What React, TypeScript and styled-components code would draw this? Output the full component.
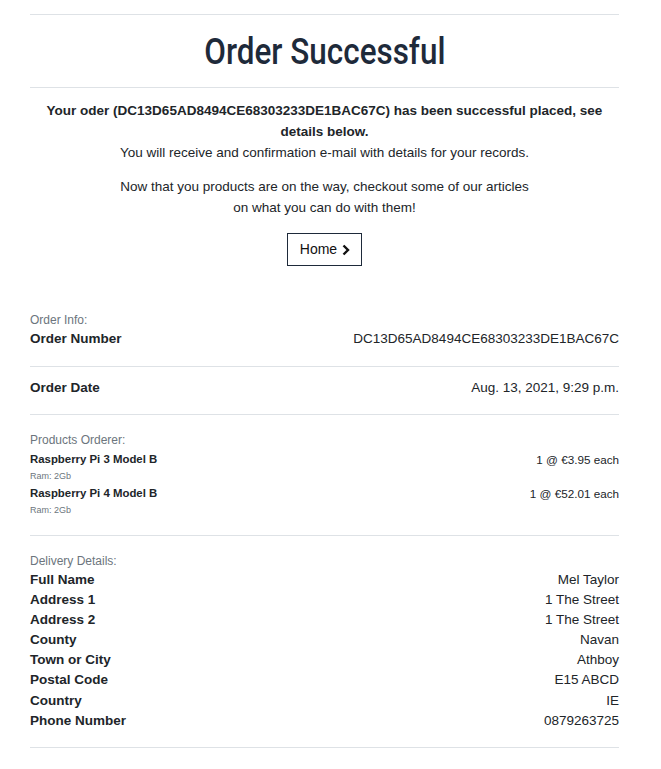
import styled, { createGlobalStyle } from "styled-components";

const GlobalStyle = createGlobalStyle`
  body {
    margin: 0;
    background: #ffffff;
    font-family: "Liberation Sans", Arial, sans-serif;
    color: #212529;
  }
`;

const Page = styled.div`
  width: 589px;
  margin-left: 30px;
  padding-top: 14px;
`;

const Rule = styled.hr`
  border: none;
  border-top: 1px solid #dee2e6;
  margin: 0;
`;

const TitleBox = styled.div`
  height: 72px;
  display: flex;
  align-items: center;
  justify-content: center;
`;

const Title = styled.h1`
  margin: 0;
  font-family: Roboto, "Liberation Sans", sans-serif;
  font-weight: 500;
  font-size: 37px;
  color: #1e2a3a;
  transform: scaleX(0.85);
`;

const Intro = styled.div`
  text-align: center;
  font-size: 13.5px;
  line-height: 21px;
  padding-top: 12px;
`;

const Strong = styled.p`
  margin: 0;
  font-weight: 700;
`;

const Plain = styled.p<{ $gap?: number }>`
  margin: 0;
  margin-top: ${(p) => p.$gap ?? 0}px;
`;

const HomeButton = styled.a`
  display: inline-flex;
  align-items: center;
  gap: 4px;
  margin-top: 15px;
  height: 33px;
  padding: 0 10px 0 12px;
  box-sizing: border-box;
  border: 1px solid #1e2a3a;
  color: #111;
  font-size: 14px;
  text-decoration: none;
`;

const Section = styled.div<{ $top?: number; $bottom?: number }>`
  padding-top: ${(p) => p.$top ?? 0}px;
  padding-bottom: ${(p) => p.$bottom ?? 0}px;
`;

const Caption = styled.div<{ $gap?: number }>`
  font-size: 12px;
  line-height: 14px;
  color: #6c757d;
  margin-bottom: ${(p) => p.$gap ?? 0}px;
`;

const Row = styled.div<{ $h: number; $pad?: number }>`
  display: flex;
  justify-content: space-between;
  align-items: flex-start;
  box-sizing: border-box;
  height: ${(p) => p.$h}px;
  padding-top: ${(p) => p.$pad ?? 0}px;
  font-size: 13.5px;
  line-height: ${(p) => (p.$pad ? 18 : p.$h)}px;
`;

const Label = styled.span`
  font-weight: 700;
`;

const ItemList = styled.div`
  margin-top: 3.5px;
`;

const ItemRow = styled.div`
  display: flex;
  justify-content: space-between;
  align-items: flex-start;
`;

const ItemName = styled.div`
  font-size: 11.4px;
  font-weight: 700;
  line-height: 17px;
`;

const ItemMeta = styled.div`
  font-size: 9px;
  color: #6c757d;
  line-height: 17px;
`;

const ItemPrice = styled.div`
  font-size: 11.7px;
  line-height: 17px;
`;

const delivery: [string, string][] = [
  ["Full Name", "Mel Taylor"],
  ["Address 1", "1 The Street"],
  ["Address 2", "1 The Street"],
  ["County", "Navan"],
  ["Town or City", "Athboy"],
  ["Postal Code", "E15 ABCD"],
  ["Country", "IE"],
  ["Phone Number", "0879263725"],
];

const products = [
  { name: "Raspberry Pi 3 Model B", price: "1 @ €3.95 each" },
  { name: "Raspberry Pi 4 Model B", price: "1 @ €52.01 each" },
];

export default function App() {
  return (
    <>
      <GlobalStyle />
      <Page>
        <Rule />
        <TitleBox>
          <Title>Order Successful</Title>
        </TitleBox>
        <Rule />
        <Intro>
          <Strong>
            Your oder (DC13D65AD8494CE68303233DE1BAC67C) has been successful placed, see
            details below.
          </Strong>
          <Plain>You will receive and confirmation e-mail with details for your records.</Plain>
          <Plain $gap={13}>
            Now that you products are on the way, checkout some of our articles
            <br />
            on what you can do with them!
          </Plain>
          <HomeButton href="#">
            Home
            <svg width="10" height="12" viewBox="0 0 10 12">
              <path d="M2.5 1.5 L7 6 L2.5 10.5" fill="none" stroke="#111" strokeWidth="2.4" />
            </svg>
          </HomeButton>
        </Intro>

        <Section $top={47} $bottom={16}>
          <Caption $gap={1}>Order Info:</Caption>
          <Row $h={22}>
            <Label>Order Number</Label>
            <span>DC13D65AD8494CE68303233DE1BAC67C</span>
          </Row>
        </Section>
        <Rule />
        <Row $h={47} $pad={12}>
          <Label>Order Date</Label>
          <span>Aug. 13, 2021, 9:29 p.m.</span>
        </Row>
        <Rule />

        <Section $top={18} $bottom={16.5}>
          <Caption>Products Orderer:</Caption>
          <ItemList>
            {products.map((p) => (
              <ItemRow key={p.name}>
                <div>
                  <ItemName>{p.name}</ItemName>
                  <ItemMeta>Ram: 2Gb</ItemMeta>
                </div>
                <ItemPrice>{p.price}</ItemPrice>
              </ItemRow>
            ))}
          </ItemList>
        </Section>
        <Rule />

        <Section $top={18} $bottom={16}>
          <Caption $gap={2}>Delivery Details:</Caption>
          {delivery.map(([k, v]) => (
            <Row $h={20.1} key={k}>
              <Label>{k}</Label>
              <span>{v}</span>
            </Row>
          ))}
        </Section>
        <Rule />
      </Page>
    </>
  );
}
